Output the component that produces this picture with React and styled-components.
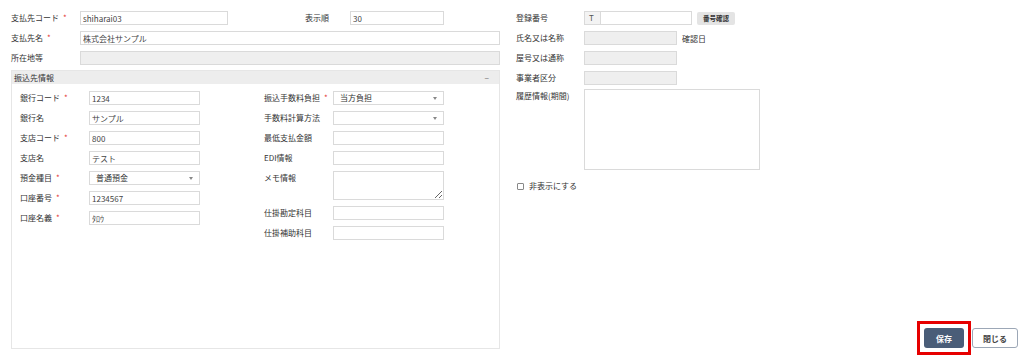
import React from "react";
import styled, { createGlobalStyle } from "styled-components";

const Global = createGlobalStyle`
  html, body { margin: 0; padding: 0; background: #fff; }
  body {
    font-family: "Noto Sans CJK JP", "Noto Sans", sans-serif;
    font-size: 8px;
    color: #333;
  }
  * { box-sizing: border-box; }
`;

const Page = styled.div`
  display: flex;
  height: 360px;
  padding: 11px 6px 5px 11px;
`;

const LeftCol = styled.div`
  width: 489px;
  display: flex;
  flex-direction: column;
  gap: 6px;
  padding-bottom: 6px;
`;

const RightCol = styled.div`
  width: 244px;
  margin-left: 16px;
  display: flex;
  flex-direction: column;
  gap: 6px;
`;

const Row = styled.div`
  display: flex;
  align-items: ${(p) => (p.$top ? "flex-start" : "center")};
  min-height: 14px;
  margin-top: ${(p) => p.$mt || 0}px;
`;

const Label = styled.label`
  width: ${(p) => p.$w || 69}px;
  margin-left: ${(p) => p.$ml || 0}px;
  flex-shrink: 0;
  line-height: 14px;
  white-space: nowrap;
  color: #333;
`;

const Req = styled.span`
  color: #e53935;
  margin-left: 4px;
`;

const Input = styled.input`
  width: ${(p) => p.$w}px;
  height: 14px;
  border: 1px solid #dadada;
  padding: 0 2px;
  font: inherit;
  font-size: 8px;
  color: #444;
  background: ${(p) => (p.disabled ? "#efefef" : "#fff")};
  outline: none;
  margin: 0;
`;

const SelectBox = styled.div`
  position: relative;
  width: ${(p) => p.$w}px;
  height: 14px;
  border: 1px solid #dadada;
  padding: 0 6px;
  line-height: 12px;
  color: #333;
  background: #fff;
  &::after {
    content: "";
    position: absolute;
    right: 6px;
    top: 5px;
    border-left: 2px solid transparent;
    border-right: 2px solid transparent;
    border-top: 3px solid #888;
  }
`;

const TextArea = styled.textarea`
  width: ${(p) => p.$w}px;
  height: ${(p) => p.$h}px;
  border: 1px solid #dadada;
  font: inherit;
  font-size: 8px;
  padding: 2px;
  margin: 0;
  outline: none;
  resize: ${(p) => (p.$noResize ? "none" : "both")};
  display: block;
`;

const Panel = styled.div`
  flex: 1;
  margin-top: -1px;
  border: 1px solid #e6e6e6;
  display: flex;
  flex-direction: column;
`;

const PanelHeader = styled.div`
  height: 13px;
  background: #ededed;
  display: flex;
  align-items: center;
  justify-content: space-between;
  padding: 0 10px 0 2px;
  color: #333;
`;

const Collapse = styled.span`
  color: #777;
  font-size: 8px;
`;

const PanelBody = styled.div`
  display: grid;
  grid-template-columns: 180px 180px;
  column-gap: 64px;
  padding: 7px 8px;
  align-items: start;
`;

const SubCol = styled.div`
  display: flex;
  flex-direction: column;
  gap: 6px;
`;

const Addon = styled.span`
  width: 16px;
  height: 14px;
  border: 1px solid #dadada;
  border-right: none;
  background: #f3f3f3;
  color: #555;
  line-height: 12px;
  padding-left: 4px;
  font-size: 8px;
`;

const SmallButton = styled.button`
  margin-left: 5px;
  width: 38px;
  height: 13px;
  border: none;
  border-radius: 2px;
  background: #e4e4e4;
  color: #333;
  font-family: inherit;
  font-weight: 700;
  font-size: 6.5px;
  padding: 0;
  line-height: 13px;
`;

const Note = styled.span`
  margin-left: 5px;
`;

const Check = styled.input`
  appearance: none;
  width: 7px;
  height: 7px;
  margin: 0 5px 0 1px;
  border: 1px solid #888;
  border-radius: 1px;
  background: #fff;
`;

const CheckLabel = styled.label`
  display: flex;
  align-items: center;
  line-height: 14px;
`;

const Actions = styled.div`
  margin-left: auto;
  align-self: flex-end;
  display: flex;
  align-items: center;
`;

const Highlight = styled.div`
  border: 3px solid #e60000;
  padding: 4px;
  display: flex;
`;

const Button = styled.button`
  height: 20px;
  width: ${(p) => p.$w}px;
  border-radius: 3px;
  font-family: inherit;
  font-size: 8px;
  font-weight: 700;
  padding: 0;
  margin-left: ${(p) => p.$ml || 0}px;
  background: ${(p) => (p.$primary ? "#4a5d78" : "#fff")};
  color: ${(p) => (p.$primary ? "#fff" : "#444")};
  border: ${(p) => (p.$primary ? "none" : "1px solid #9ca7b6")};
`;

const Field = ({ label, req, children, top, mt }) => (
  <Row $top={top} $mt={mt}>
    <Label>
      {label}
      {req && <Req>*</Req>}
    </Label>
    {children}
  </Row>
);

export default function App() {
  return (
    <>
      <Global />
      <Page>
        <LeftCol>
          <Row>
            <Label>
              支払先コード<Req>*</Req>
            </Label>
            <Input $w={148} defaultValue="shiharai03" />
            <Label $w={45} $ml={77}>
              表示順
            </Label>
            <Input $w={94} defaultValue="30" />
          </Row>
          <Field label="支払先名" req>
            <Input $w={420} defaultValue="株式会社サンプル" />
          </Field>
          <Field label="所在地等">
            <Input $w={420} disabled />
          </Field>
          <Panel>
            <PanelHeader>
              <span>振込先情報</span>
              <Collapse>−</Collapse>
            </PanelHeader>
            <PanelBody>
              <SubCol>
                <Field label="銀行コード" req>
                  <Input $w={111} defaultValue="1234" />
                </Field>
                <Field label="銀行名">
                  <Input $w={111} defaultValue="サンプル" />
                </Field>
                <Field label="支店コード" req>
                  <Input $w={111} defaultValue="800" />
                </Field>
                <Field label="支店名">
                  <Input $w={111} defaultValue="テスト" />
                </Field>
                <Field label="預金種目" req>
                  <SelectBox $w={111}>普通預金</SelectBox>
                </Field>
                <Field label="口座番号" req>
                  <Input $w={111} defaultValue="1234567" />
                </Field>
                <Field label="口座名義" req>
                  <Input $w={111} defaultValue="ﾀﾛｳ" />
                </Field>
              </SubCol>
              <SubCol>
                <Field label="振込手数料負担" req>
                  <SelectBox $w={111}>当方負担</SelectBox>
                </Field>
                <Field label="手数料計算方法">
                  <SelectBox $w={111} />
                </Field>
                <Field label="最低支払金額">
                  <Input $w={111} />
                </Field>
                <Field label="EDI情報">
                  <Input $w={111} />
                </Field>
                <Field label="メモ情報" top>
                  <TextArea $w={111} $h={29} />
                </Field>
                <Field label="仕掛勘定科目">
                  <Input $w={111} />
                </Field>
                <Field label="仕掛補助科目">
                  <Input $w={111} />
                </Field>
              </SubCol>
            </PanelBody>
          </Panel>
        </LeftCol>

        <RightCol>
          <Row>
            <Label $w={68}>登録番号</Label>
            <Addon>T</Addon>
            <Input $w={92} />
            <SmallButton>番号確認</SmallButton>
          </Row>
          <Row>
            <Label $w={68}>氏名又は名称</Label>
            <Input $w={93} disabled />
            <Note>確認日</Note>
          </Row>
          <Row>
            <Label $w={68}>屋号又は通称</Label>
            <Input $w={93} disabled />
          </Row>
          <Row>
            <Label $w={68}>事業者区分</Label>
            <Input $w={93} disabled />
          </Row>
          <Row $top $mt={-2}>
            <Label $w={68}>履歴情報(期間)</Label>
            <TextArea $w={176} $h={81} $noResize />
          </Row>
          <Row $mt={3}>
            <CheckLabel>
              <Check type="checkbox" />
              非表示にする
            </CheckLabel>
          </Row>
        </RightCol>

        <Actions>
          <Highlight>
            <Button $primary $w={40}>
              保存
            </Button>
          </Highlight>
          <Button $w={46} $ml={1}>
            閉じる
          </Button>
        </Actions>
      </Page>
    </>
  );
}
